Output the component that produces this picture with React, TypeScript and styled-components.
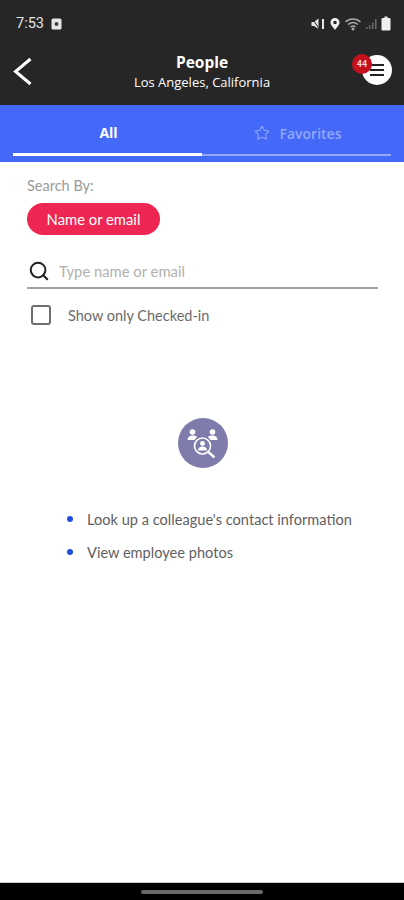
import React from 'react';
import styled, { createGlobalStyle } from 'styled-components';
import { Star, Search } from 'lucide-react';

const GlobalStyle = createGlobalStyle`
    html, body {
        margin: 0;
        padding: 0;
        background: #fff;
    }
    * {
        box-sizing: border-box;
    }
`;

const Screen = styled.div`
    width: 404px;
    height: 900px;
    display: flex;
    flex-direction: column;
    font-family: 'Open Sans', 'Liberation Sans', sans-serif;
    overflow: hidden;
`;

const Header = styled.div`
    height: 105px;
    flex: none;
    background: #262626;
    color: #fff;
`;

const StatusBar = styled.div`
    height: 47px;
    padding: 0 13px 0 16px;
    display: flex;
    align-items: center;
    justify-content: space-between;
`;

const Time = styled.span`
    font-family: Roboto, sans-serif;
    font-size: 14.5px;
    color: #e4e4e4;
    margin-right: 3px;
`;

const StatusGroup = styled.div`
    display: flex;
    align-items: center;
    gap: 4px;
`;

const TitleRow = styled.div`
    height: 49px;
    padding: 0 12px;
    display: flex;
    align-items: center;
    justify-content: space-between;
`;

const TitleBlock = styled.div`
    flex: 1;
    text-align: center;
    padding-left: 8px;
`;

const Title = styled.div`
    font-size: 15.5px;
    font-weight: 700;
    line-height: 20px;
`;

const Subtitle = styled.div`
    font-size: 13px;
    line-height: 20px;
`;

const MenuWrap = styled.div`
    position: relative;
    width: 30px;
    height: 30px;
    margin-bottom: 3px;
    border-radius: 50%;
    background: #fff;
    display: flex;
    flex-direction: column;
    align-items: center;
    justify-content: center;
    gap: 3px;
`;

const MenuLine = styled.span`
    width: 14px;
    height: 2px;
    background: #222;
`;

const Badge = styled.span`
    position: absolute;
    left: -10px;
    top: -1px;
    width: 20px;
    height: 20px;
    border-radius: 50%;
    background: #c4111d;
    color: #f4d6d6;
    font-family: Roboto, sans-serif;
    font-size: 9px;
    font-weight: 700;
    display: flex;
    align-items: center;
    justify-content: center;
`;

const TabBar = styled.div`
    height: 57px;
    flex: none;
    background: #4468f8;
    padding: 0 13px;
    display: flex;
`;

const Tab = styled.div<{ $active?: boolean }>`
    flex: ${(p) => (p.$active ? '0 0 189px' : '1')};
    height: 51px;
    display: flex;
    align-items: center;
    justify-content: center;
    gap: 10px;
    padding-top: 7px;
    padding-left: 2px;
    font-size: 14px;
    font-weight: ${(p) => (p.$active ? 700 : 600)};
    color: ${(p) => (p.$active ? '#fff' : '#92a8fb')};
    border-bottom: ${(p) => (p.$active ? '3px solid #fff' : '2px solid #92a8fb')};
    margin-bottom: ${(p) => (p.$active ? '0' : '1px')};
`;

const Body = styled.div`
    flex: 1;
    background: #fff;
    padding: 14px 26px 0 27px;
    border-bottom: 1px solid #ccc;
`;

const SearchLabel = styled.div`
    font-family: Lato, sans-serif;
    font-size: 14.5px;
    line-height: 20px;
    color: #9a9a9a;
`;

const Pill = styled.div`
    width: 133px;
    height: 32px;
    margin-top: 7px;
    border-radius: 16px;
    background: #ee2653;
    color: #fff;
    font-family: Lato, sans-serif;
    font-size: 14.8px;
    display: flex;
    align-items: center;
    justify-content: center;
`;

const SearchRow = styled.div`
    height: 34px;
    margin-top: 20px;
    display: flex;
    align-items: center;
    gap: 9px;
    padding-left: 1px;
    border-bottom: 2px solid #a3a3a3;
`;

const Placeholder = styled.span`
    font-family: Lato, sans-serif;
    font-size: 14.8px;
    color: #b0b0b0;
`;

const CheckRow = styled.div`
    margin-top: 16px;
    padding-left: 4px;
    display: flex;
    align-items: center;
    gap: 17px;
    font-family: Lato, sans-serif;
    font-size: 14.5px;
    color: #6a6a6a;
`;

const CheckBox = styled.span`
    width: 20px;
    height: 20px;
    border: 2px solid #6f6f6f;
    border-radius: 3px;
`;

const EmptyState = styled.div`
    margin-top: 93px;
    display: flex;
    flex-direction: column;
    align-items: center;
`;

const EmptyIcon = styled.div`
    width: 50px;
    height: 50px;
    border-radius: 50%;
    background: #7f7bab;
    display: flex;
    align-items: center;
    justify-content: center;
`;

const Hints = styled.ul`
    list-style: none;
    margin: 41px 0 0;
    padding: 0 0 0 13px;
    align-self: flex-start;
    display: flex;
    flex-direction: column;
    gap: 13px;
`;

const Hint = styled.li`
    display: flex;
    align-items: center;
    gap: 14px;
    margin-left: 27px;
    height: 20px;
    font-family: Lato, sans-serif;
    font-size: 14.6px;
    color: #5f5f5f;
    white-space: nowrap;
    &::before {
        content: '';
        width: 6px;
        height: 6px;
        border-radius: 50%;
        background: #1f4fe0;
    }
`;

const NavBar = styled.div`
    height: 17px;
    flex: none;
    background: #000;
    display: flex;
    align-items: center;
    justify-content: center;
`;

const NavHandle = styled.span`
    width: 122px;
    height: 4px;
    margin-top: 1px;
    border-radius: 2px;
    background: #6a6a6a;
`;

const BackIcon = () => (
    <svg width="22" height="32" viewBox="0 0 22 32" fill="none">
        <path d="M18.500 3 L3.500 15.500 L18.500 28" stroke="#fff" strokeWidth="3" />
    </svg>
);

const MutedIcon = () => (
    <svg width="14" height="14" viewBox="0 0 14 14" fill="#e8e8e8">
        <path d="M0.500 5h2.500l4.500-3.500V12L3 9H0.500z" />
        <path d="M11 2h2v10h-2z" />
        <path d="M1 1 L8.500 12.500" stroke="#262626" strokeWidth="1" />
    </svg>
);

const PinIcon = () => (
    <svg width="12" height="14" viewBox="0 0 12 14" fill="none">
        <path d="M6 13 C3 9 1.500 7.500 1.500 5.500 a4.500 4.500 0 0 1 9 0 C10.500 7.500 9 9 6 13z" fill="#f2f2f2" />
        <circle cx="6" cy="5.500" r="1.800" fill="#262626" />
    </svg>
);

const WifiIcon = () => (
    <svg width="16" height="14" viewBox="0.500 0 16 14" fill="none" stroke="#a8a8a8" strokeWidth="1.400">
        <path d="M1 5 C5 1 12 1 16 5" />
        <path d="M3.500 7.500 C6.500 5 10.500 5 13.500 7.500" />
        <path d="M6 10 C7.500 8.800 9.500 8.800 11 10" />
        <circle cx="8.500" cy="12" r="0.800" fill="#a8a8a8" />
    </svg>
);

const SignalIcon = () => (
    <svg width="12" height="14" viewBox="0 0 12 14" fill="#6e6e6e">
        <path d="M1 10h1.500v2H1zM4 8h1.500v4H4zM7 5.500h1.500V12H7zM10 2h1.500v10H10z" />
    </svg>
);

const BatteryIcon = () => (
    <svg width="10" height="15" viewBox="0 0 10 15" fill="#f0f0f0">
        <path d="M3.500 0.500h3v1.500h2a1 1 0 0 1 1 1v10.500a1 1 0 0 1 -1 1h-7a1 1 0 0 1 -1 -1V3a1 1 0 0 1 1 -1h2z" />
    </svg>
);

const NotifyIcon = () => (
    <svg width="11" height="12" viewBox="0 0 11 12">
        <rect x="0.500" y="0.500" width="10" height="11" rx="1.500" fill="#e6e6e6" />
        <circle cx="5.500" cy="6" r="2" fill="#444" />
    </svg>
);

const PeopleSearchIcon = () => (
    <svg width="36" height="32" viewBox="0 0 36 32" fill="none">
        <circle cx="7.500" cy="5" r="2.800" fill="#fff" />
        <path d="M2.500 13 c0-3 2-4.500 5-4.500 s3.500 0.500 4.500 1.500 l-2.500 3z" fill="#fff" />
        <circle cx="27.500" cy="5" r="2.800" fill="#fff" />
        <path d="M32.500 13 c0-3 -2-4.500 -5-4.500 s-3.500 0.500 -4.500 1.500 l2.500 3z" fill="#fff" />
        <circle cx="17.500" cy="19" r="8" stroke="#fff" strokeWidth="1.600" />
        <circle cx="17.500" cy="16.500" r="2.400" fill="#fff" />
        <path d="M13 23.500 c0-3 2-4 4.500-4 s4.500 1 4.500 4z" fill="#fff" />
        <path d="M23.500 25 L29.500 30.500" stroke="#fff" strokeWidth="2.400" />
    </svg>
);

const App: React.FC = () => {
    return (
        <Screen>
            <GlobalStyle />
            <Header>
                <StatusBar>
                    <StatusGroup>
                        <Time>7:53</Time>
                        <NotifyIcon />
                    </StatusGroup>
                    <StatusGroup>
                        <MutedIcon />
                        <PinIcon />
                        <WifiIcon />
                        <SignalIcon />
                        <BatteryIcon />
                    </StatusGroup>
                </StatusBar>
                <TitleRow>
                    <BackIcon />
                    <TitleBlock>
                        <Title>People</Title>
                        <Subtitle>Los Angeles, California</Subtitle>
                    </TitleBlock>
                    <MenuWrap>
                        <MenuLine />
                        <MenuLine />
                        <MenuLine />
                        <Badge>44</Badge>
                    </MenuWrap>
                </TitleRow>
            </Header>
            <TabBar>
                <Tab $active>All</Tab>
                <Tab>
                    <Star size={16} strokeWidth={1.6} />
                    Favorites
                </Tab>
            </TabBar>
            <Body>
                <SearchLabel>Search By:</SearchLabel>
                <Pill>Name or email</Pill>
                <SearchRow>
                    <Search size={22} color="#222" strokeWidth={2.2} />
                    <Placeholder>Type name or email</Placeholder>
                </SearchRow>
                <CheckRow>
                    <CheckBox />
                    Show only Checked-in
                </CheckRow>
                <EmptyState>
                    <EmptyIcon>
                        <PeopleSearchIcon />
                    </EmptyIcon>
                    <Hints>
                        <Hint>Look up a colleague's contact information</Hint>
                        <Hint>View employee photos</Hint>
                    </Hints>
                </EmptyState>
            </Body>
            <NavBar>
                <NavHandle />
            </NavBar>
        </Screen>
    );
};

export default App;
